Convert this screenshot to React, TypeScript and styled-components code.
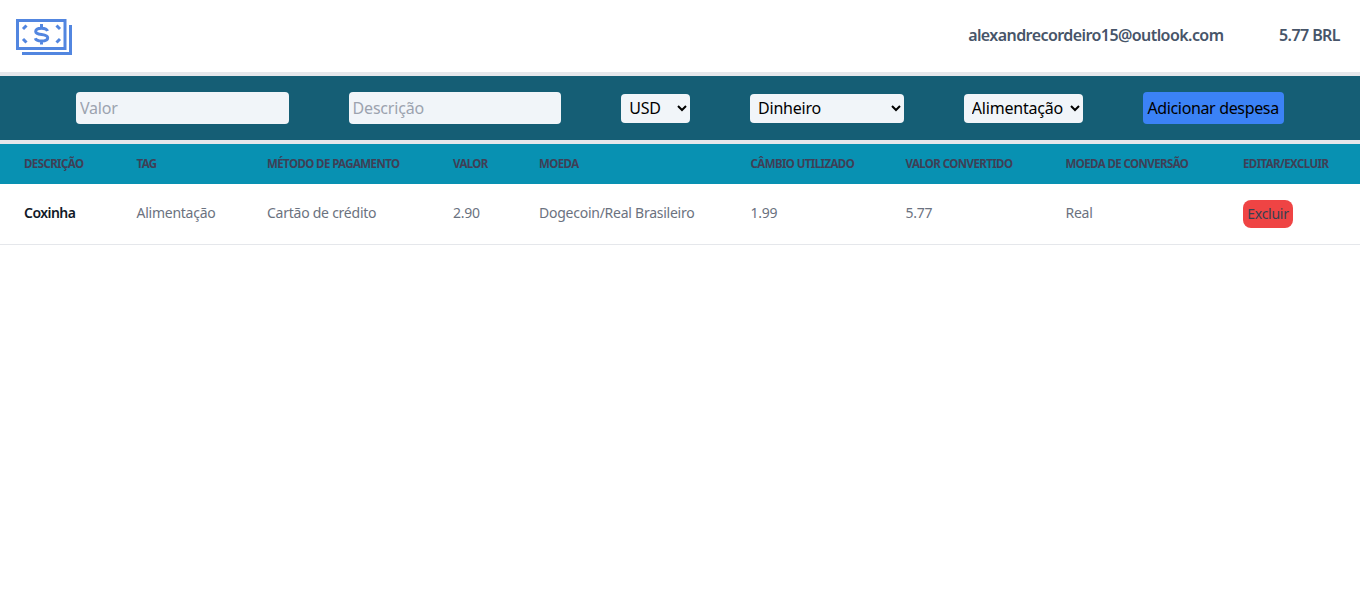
import { createGlobalStyle } from "styled-components";
import styled from "styled-components";

const FONT = `"Noto Sans", "Open Sans", sans-serif`;

const GlobalStyle = createGlobalStyle`
  html, body {
    margin: 0;
    padding: 0;
    background: #fff;
    font-family: ${FONT};
  }
  * {
    box-sizing: border-box;
  }
`;

const COLUMNS = [
  { label: "Descrição", width: 112.5 },
  { label: "Tag", width: 130.5 },
  { label: "Método de pagamento", width: 186 },
  { label: "Valor", width: 86 },
  { label: "Moeda", width: 211.5 },
  { label: "Câmbio utilizado", width: 155 },
  { label: "Valor convertido", width: 160 },
  { label: "Moeda de conversão", width: 177.5 },
  { label: "Editar/Excluir", width: 141 },
];

const ROW = [
  "Alimentação",
  "Cartão de crédito",
  "2.90",
  "Dogecoin/Real Brasileiro",
  "1.99",
  "5.77",
  "Real",
];

function Logo() {
  return (
    <svg width="56" height="36" viewBox="0 0 56 36" fill="none" stroke="#5286e0" strokeWidth="3">
      <rect x="1.5" y="1.5" width="47.5" height="28" />
      <path d="M6 34.500h48.500V6" />
      <path d="M10.500 6.500 7 10M40.500 6.500 44 10M7 20 10.500 23.500M44 20 40.500 23.500" />
      <path d="M31.500 12c-.6-1.800-2.800-2.800-6-2.800-3.600 0-5.800 1.300-5.800 3.300 0 4.600 12 1.400 12 6.200 0 2-2.400 3.300-6.200 3.300-3.300 0-5.600-1-6.200-2.800M25.500 5v4M25.500 22v3.500" />
    </svg>
  );
}

export default function App() {
  return (
    <>
      <GlobalStyle />
      <Header>
        <Logo />
        <UserInfo>
          <span>alexandrecordeiro15@outlook.com</span>
          <span>5.77 BRL</span>
        </UserInfo>
      </Header>
      <ExpenseForm>
        <TextInput placeholder="Valor" readOnly />
        <TextInput placeholder="Descrição" readOnly />
        <Select $width={69} defaultValue="USD">
          <option>USD</option>
        </Select>
        <Select $width={154} defaultValue="Dinheiro">
          <option>Dinheiro</option>
        </Select>
        <Select $width={119} defaultValue="Alimentação">
          <option>Alimentação</option>
        </Select>
        <AddButton type="button">Adicionar despesa</AddButton>
      </ExpenseForm>
      <Table>
        <colgroup>
          {COLUMNS.map((col) => (
            <col key={col.label} width={col.width} />
          ))}
        </colgroup>
        <thead>
          <tr>
            {COLUMNS.map((col) => (
              <HeadCell key={col.label}>{col.label}</HeadCell>
            ))}
          </tr>
        </thead>
        <tbody>
          <BodyRow>
            <NameCell>Coxinha</NameCell>
            {ROW.map((value) => (
              <BodyCell key={value}>{value}</BodyCell>
            ))}
            <BodyCell>
              <DeleteButton type="button">Excluir</DeleteButton>
            </BodyCell>
          </BodyRow>
        </tbody>
      </Table>
    </>
  );
}

const Header = styled.header`
  display: flex;
  align-items: center;
  justify-content: space-between;
  height: 76px;
  padding: 1px 20px 0 16px;
  border-bottom: 4px solid #e5e7eb;
`;

const UserInfo = styled.div`
  display: flex;
  gap: 55.500px;
  padding-bottom: 4px;
  font-size: 16px;
  font-weight: 600;
  color: #475569;
  letter-spacing: -0.57px;
`;

const ExpenseForm = styled.form`
  display: flex;
  align-items: center;
  gap: 59.8px;
  height: 68px;
  padding-left: 76px;
  background: #155e75;
  border-bottom: 4px solid #e5e7eb;
`;

const TextInput = styled.input`
  width: 212.8px;
  height: 32px;
  padding: 0 4px;
  border: none;
  border-radius: 4px;
  background: #f1f5f9;
  font-family: ${FONT};
  font-size: 16px;
  letter-spacing: -0.2px;
  outline: none;

  &::placeholder {
    color: #9ca3af;
  }
`;

const Select = styled.select<{ $width: number }>`
  width: ${(props) => props.$width}px;
  height: 29px;
  padding: 0 4px;
  border: none;
  border-radius: 4px;
  background-color: #f1f5f9;
  color: #000;
  font-family: ${FONT};
  font-size: 16px;
  letter-spacing: -0.2px;
`;

const AddButton = styled.button`
  width: 141px;
  height: 32px;
  padding: 0;
  border: none;
  border-radius: 4px;
  background: #3b82f6;
  color: #000;
  font-family: ${FONT};
  font-size: 16px;
  letter-spacing: -0.35px;
  white-space: nowrap;
`;

const Table = styled.table`
  width: 1360px;
  table-layout: fixed;
  border-collapse: collapse;
`;

const HeadCell = styled.th`
  height: 40px;
  padding: 0 0 2px 24px;
  background: #0891b2;
  color: #3f3f56;
  font-size: 11.5px;
  font-weight: 700;
  letter-spacing: -0.6px;
  text-align: left;
  text-transform: uppercase;
  white-space: nowrap;
`;

const BodyRow = styled.tr`
  height: 60.500px;
  border-bottom: 1px solid #e5e7eb;
`;

const BodyCell = styled.td`
  padding: 0 0 4px 24px;
  color: #6b7280;
  font-size: 14px;
  letter-spacing: -0.25px;
  white-space: nowrap;
`;

const NameCell = styled(BodyCell)`
  color: #111827;
  font-weight: 600;
  letter-spacing: -0.55px;
`;

const DeleteButton = styled.button`
  display: block;
  width: 50px;
  height: 28px;
  margin-top: 4px;
  padding: 0 0 2px;
  border: none;
  border-radius: 8px;
  background: #ef4444;
  color: #374151;
  font-family: ${FONT};
  font-size: 14px;
  letter-spacing: -0.25px;
`;
